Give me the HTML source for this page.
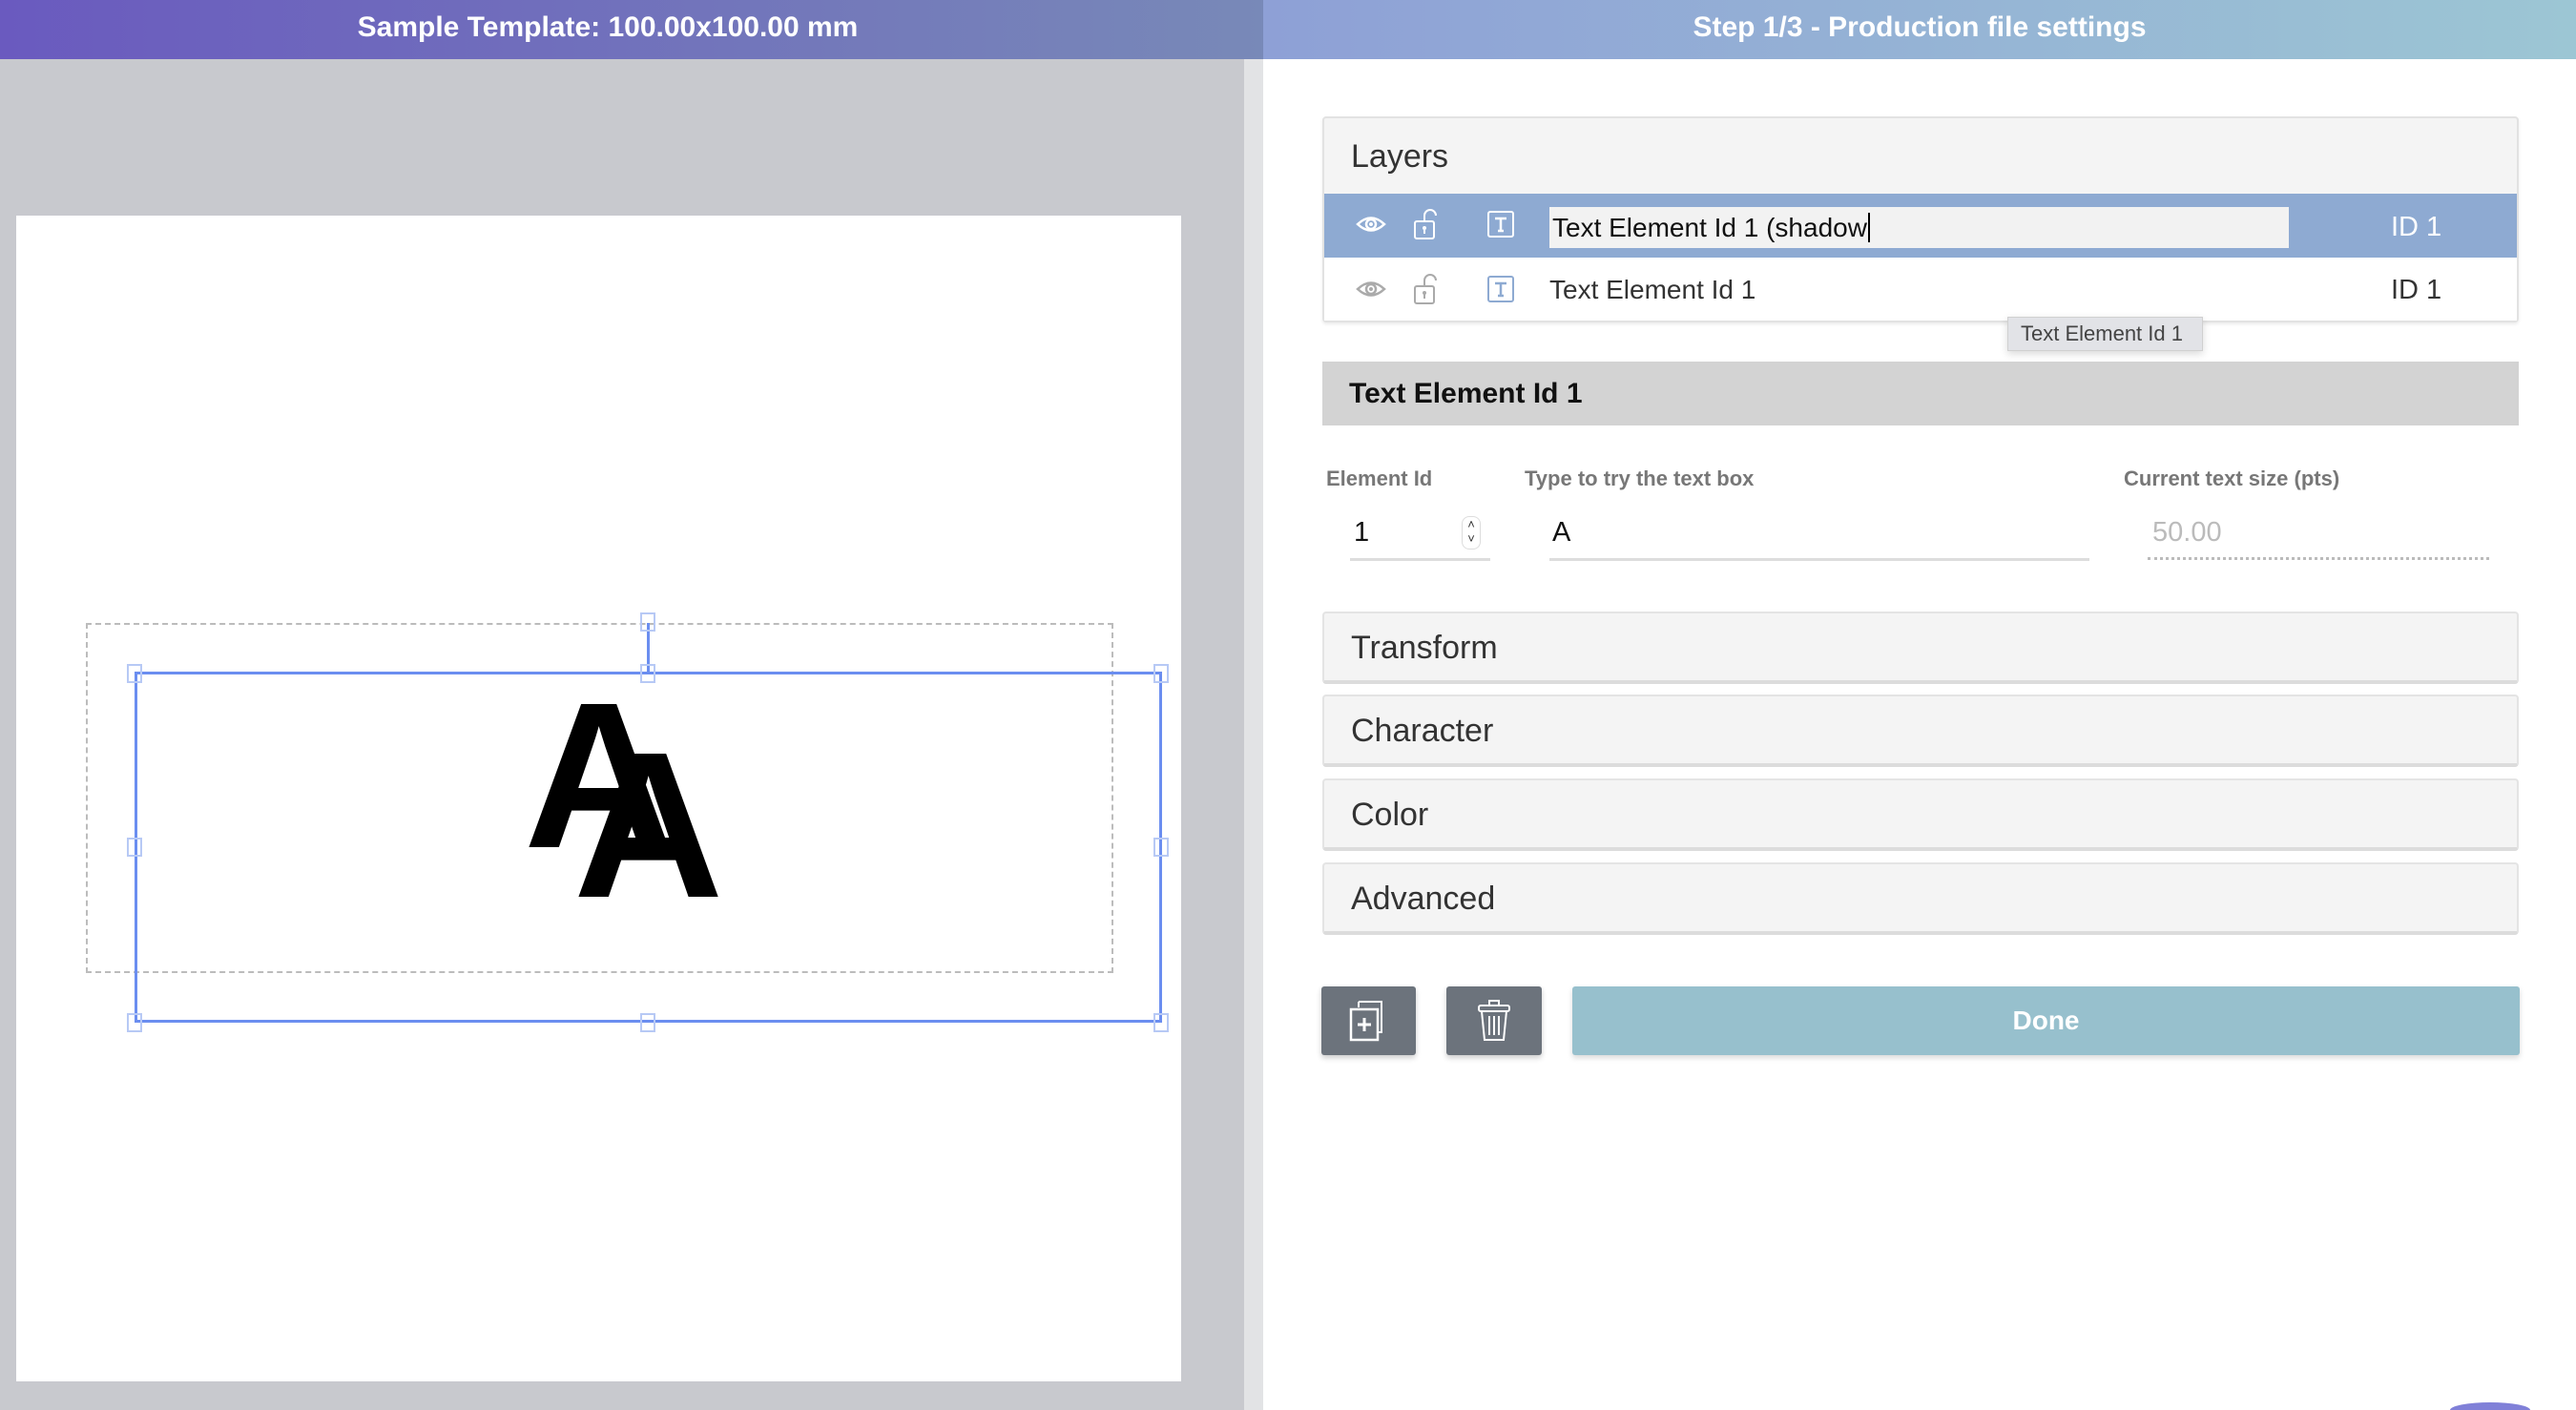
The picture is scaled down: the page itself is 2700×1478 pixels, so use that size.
<!DOCTYPE html>
<html><head><meta charset="utf-8"><style>
*{margin:0;padding:0;box-sizing:border-box}
html,body{width:2700px;height:1478px;overflow:hidden}
body{font-family:"Liberation Sans",Arial,sans-serif;background:#fff}
#wrap{position:relative;width:2700px;height:1478px;overflow:hidden}
.abs{position:absolute}
.hl{left:0;top:0;width:1324px;height:62px;background:linear-gradient(90deg,#6a5abf,#7889b8)}
.hlt{left:0;top:0;width:1274px;height:62px;color:#fff;font-weight:bold;font-size:30px;text-align:center;line-height:58px}
.hr{left:1324px;top:0;width:1376px;height:62px;background:linear-gradient(90deg,#8ea0d6,#9cc6d4);color:#fff;font-weight:bold;font-size:30px;text-align:center;line-height:58px}
.lp{left:0;top:62px;width:1304px;height:1416px;background:#c8c9ce}
.strip{left:1304px;top:62px;width:20px;height:1416px;background:#e2e3e5}
.canvas{left:17px;top:226px;width:1221px;height:1222px;background:#fff}
.h{position:absolute;width:16px;height:20px;border:2px solid #b7c9f5;background:transparent}
.card{border:2px solid #e2e2e2;border-radius:4px;background:#f4f4f4}
.acc{left:1386px;width:1254px;height:76px;background:#f4f4f4;border:2px solid #e4e4e4;border-bottom:4px solid #dcdcdc;border-radius:4px;font-size:34px;color:#333;padding-left:28px;line-height:72px}
.lbl{font-size:22px;font-weight:bold;color:#777;top:489px}
</style></head><body><div id="wrap">
<div class="abs hl"></div>
<div class="abs hlt">Sample Template: 100.00x100.00 mm</div>
<div class="abs hr">Step 1/3 - Production file settings</div>
<div class="abs lp"></div>
<div class="abs strip"></div>
<div class="abs canvas"></div>
<div class="abs" style="left:90px;top:653px;width:1077px;height:367px;border:2px dashed #bcbcbc"></div>
<div class="abs" style="left:549px;top:705px;font-size:218px;font-weight:bold;line-height:1">A</div>
<div class="abs" style="left:601px;top:757px;font-size:218px;font-weight:bold;line-height:1">A</div>
<div class="abs" style="left:141px;top:704px;width:1077px;height:368px;border:3px solid #6b8ef0"></div>
<div class="abs" style="left:678px;top:653px;width:3px;height:52px;background:#6b8ef0"></div>
<div class="h" style="left:133px;top:696px"></div>
<div class="h" style="left:671px;top:696px"></div>
<div class="h" style="left:1209px;top:696px"></div>
<div class="h" style="left:133px;top:878px"></div>
<div class="h" style="left:1209px;top:878px"></div>
<div class="h" style="left:133px;top:1062px"></div>
<div class="h" style="left:671px;top:1062px"></div>
<div class="h" style="left:1209px;top:1062px"></div>
<div class="h" style="left:671px;top:642px"></div>

<div class="abs card" style="left:1386px;top:122px;width:1254px;height:216px;box-shadow:0 2px 3px rgba(0,0,0,.08)"></div>
<div class="abs" style="left:1416px;top:145px;font-size:34px;color:#333">Layers</div>
<div class="abs" style="left:1388px;top:203px;width:1250px;height:67px;background:#8eaad2"></div>
<div class="abs" style="left:1388px;top:270px;width:1250px;height:66px;background:#fff"></div>
<div class="abs" style="left:1624px;top:217px;width:775px;height:43px;background:#f2f2f2"></div>
<div class="abs" style="left:1627px;top:223px;font-size:28px;color:#111">Text Element Id 1 (shadow<span style="border-left:2px solid #000;margin-left:1px"></span></div>
<div class="abs" style="left:2506px;top:222px;font-size:29px;color:#fff">ID 1</div>
<div class="abs" style="left:1624px;top:288px;font-size:28px;color:#333">Text Element Id 1</div>
<div class="abs" style="left:2506px;top:288px;font-size:29px;color:#333">ID 1</div>
<svg class="abs" style="left:1420px;top:222px" width="34" height="26" viewBox="0 0 34 26"><path d="M3 13 Q17 0 31 13 Q17 26 3 13Z" fill="none" stroke="#fff" stroke-width="2.5"/><circle cx="17" cy="13" r="5" fill="none" stroke="#fff" stroke-width="2.5"/><circle cx="17" cy="13" r="2" fill="#fff"/></svg>
<svg class="abs" style="left:1480px;top:218px" width="26" height="34" viewBox="0 0 26 34"><path d="M13 14 V8 A6 6 0 0 1 25 8" fill="none" stroke="#fff" stroke-width="2"/><rect x="3" y="14" width="20" height="18" rx="2" fill="none" stroke="#fff" stroke-width="2"/><circle cx="13" cy="21" r="2" fill="#fff"/><rect x="12" y="21" width="2" height="6" fill="#fff"/></svg>
<svg class="abs" style="left:1558px;top:220px" width="30" height="30" viewBox="0 0 30 30"><rect x="2" y="2" width="26" height="26" rx="2" fill="none" stroke="#fff" stroke-width="2"/><path d="M9 9 H21 M15 9 V22 M12 22 H18" stroke="#fff" stroke-width="2.5" fill="none"/></svg>
<svg class="abs" style="left:1420px;top:290px" width="34" height="26" viewBox="0 0 34 26"><path d="M3 13 Q17 0 31 13 Q17 26 3 13Z" fill="none" stroke="#aaa" stroke-width="2.5"/><circle cx="17" cy="13" r="5" fill="none" stroke="#aaa" stroke-width="2.5"/><circle cx="17" cy="13" r="2" fill="#aaa"/></svg>
<svg class="abs" style="left:1480px;top:286px" width="26" height="34" viewBox="0 0 26 34"><path d="M13 14 V8 A6 6 0 0 1 25 8" fill="none" stroke="#aaa" stroke-width="2"/><rect x="3" y="14" width="20" height="18" rx="2" fill="none" stroke="#aaa" stroke-width="2"/><circle cx="13" cy="21" r="2" fill="#aaa"/><rect x="12" y="21" width="2" height="6" fill="#aaa"/></svg>
<svg class="abs" style="left:1558px;top:288px" width="30" height="30" viewBox="0 0 30 30"><rect x="2" y="2" width="26" height="26" rx="2" fill="none" stroke="#8eaad2" stroke-width="2"/><path d="M9 9 H21 M15 9 V22 M12 22 H18" stroke="#8eaad2" stroke-width="2.5" fill="none"/></svg>
<div class="abs" style="left:2104px;top:332px;width:205px;height:36px;background:#e2e3e7;border:1px solid #d0d0d0;box-shadow:0 3px 8px rgba(0,0,0,.15);font-size:22px;color:#444;line-height:34px;padding-left:13px">Text Element Id 1</div>

<div class="abs" style="left:1386px;top:379px;width:1254px;height:67px;background:#d3d3d3;font-size:30px;font-weight:bold;color:#111;padding-left:28px;line-height:67px">Text Element Id 1</div>

<div class="abs lbl" style="left:1390px">Element Id</div>
<div class="abs lbl" style="left:1598px">Type to try the text box</div>
<div class="abs lbl" style="left:2226px">Current text size (pts)</div>
<div class="abs" style="left:1419px;top:542px;font-size:29px;color:#111">1</div>
<div class="abs" style="left:1532px;top:541px;width:20px;height:35px;border:1px solid #ddd;border-radius:8px;font-size:13px;text-align:center;line-height:15px;color:#333">˄<br>˅</div>
<div class="abs" style="left:1415px;top:585px;width:147px;height:3px;background:#ddd"></div>
<div class="abs" style="left:1627px;top:542px;font-size:29px;color:#111">A</div>
<div class="abs" style="left:1624px;top:585px;width:566px;height:3px;background:#ddd"></div>
<div class="abs" style="left:2256px;top:542px;font-size:29px;color:#bbb">50.00</div>
<div class="abs" style="left:2251px;top:584px;width:358px;height:0;border-top:3px dotted #bbb"></div>

<div class="abs acc" style="top:641px">Transform</div>
<div class="abs acc" style="top:728px">Character</div>
<div class="abs acc" style="top:816px">Color</div>
<div class="abs acc" style="top:904px">Advanced</div>

<div class="abs" style="left:1385px;top:1034px;width:99px;height:72px;background:#6c737c;border-radius:3px;box-shadow:0 3px 6px rgba(0,0,0,.2)"></div>
<svg class="abs" style="left:1410px;top:1048px" width="50" height="44" viewBox="0 0 50 44"><path d="M14 2 H38 V34 H34" fill="none" stroke="#fff" stroke-width="2"/><path d="M14 2 V8" stroke="#fff" stroke-width="2"/><rect x="6" y="10" width="28" height="32" fill="none" stroke="#fff" stroke-width="2.5"/><path d="M20 19 V33 M13 26 H27" stroke="#fff" stroke-width="3"/></svg>
<div class="abs" style="left:1516px;top:1034px;width:100px;height:72px;background:#6c737c;border-radius:3px;box-shadow:0 3px 6px rgba(0,0,0,.2)"></div>
<svg class="abs" style="left:1548px;top:1047px" width="36" height="46" viewBox="0 0 36 46"><rect x="13" y="2" width="10" height="5" fill="none" stroke="#fff" stroke-width="2"/><rect x="2" y="7" width="32" height="6" rx="2" fill="none" stroke="#fff" stroke-width="2"/><path d="M5 13 L8 43 H28 L31 13" fill="none" stroke="#fff" stroke-width="2"/><path d="M13 18 V38 M18 18 V38 M23 18 V38" stroke="#fff" stroke-width="2"/></svg>
<div class="abs" style="left:1648px;top:1034px;width:993px;height:72px;background:#97c0cd;border-radius:3px;box-shadow:0 3px 6px rgba(0,0,0,.15);color:#fff;font-weight:bold;font-size:28px;text-align:center;line-height:72px">Done</div>

<div class="abs" style="left:2568px;top:1470px;width:84px;height:8px;background:#8080d8;border-radius:42px 42px 0 0 / 8px 8px 0 0"></div>
</div></body></html>
